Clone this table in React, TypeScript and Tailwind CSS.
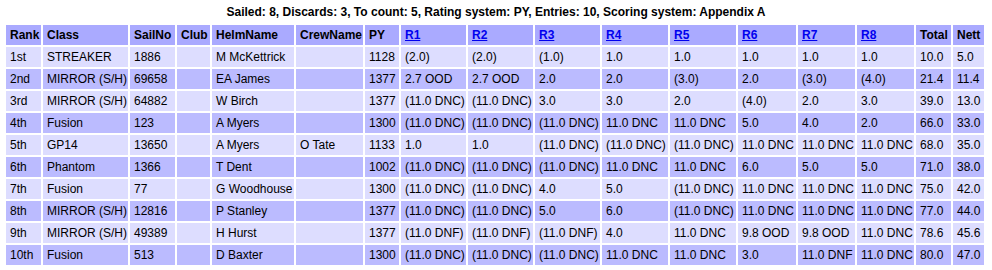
import React from "react";

type Row = string[];

const columns: { label: string; width: string; link?: boolean }[] = [
  { label: "Rank", width: "w-[35px]" },
  { label: "Class", width: "w-[85px]" },
  { label: "SailNo", width: "w-[45px]" },
  { label: "Club", width: "w-[33px]" },
  { label: "HelmName", width: "w-[82px]" },
  { label: "CrewName", width: "w-[67px]" },
  { label: "PY", width: "w-[34px]" },
  { label: "R1", width: "w-[65px]", link: true },
  { label: "R2", width: "w-[65px]", link: true },
  { label: "R3", width: "w-[65px]", link: true },
  { label: "R4", width: "w-[66px]", link: true },
  { label: "R5", width: "w-[66px]", link: true },
  { label: "R6", width: "w-[58px]", link: true },
  { label: "R7", width: "w-[57px]", link: true },
  { label: "R8", width: "w-[57px]", link: true },
  { label: "Total", width: "w-[35px]" },
  { label: "Nett", width: "w-[31px]" },
];

const rows: Row[] = [
  ["1st", "STREAKER", "1886", "", "M McKettrick", "", "1128", "(2.0)", "(2.0)", "(1.0)", "1.0", "1.0", "1.0", "1.0", "1.0", "10.0", "5.0"],
  ["2nd", "MIRROR (S/H)", "69658", "", "EA James", "", "1377", "2.7 OOD", "2.7 OOD", "2.0", "2.0", "(3.0)", "2.0", "(3.0)", "(4.0)", "21.4", "11.4"],
  ["3rd", "MIRROR (S/H)", "64882", "", "W Birch", "", "1377", "(11.0 DNC)", "(11.0 DNC)", "3.0", "3.0", "2.0", "(4.0)", "2.0", "3.0", "39.0", "13.0"],
  ["4th", "Fusion", "123", "", "A Myers", "", "1300", "(11.0 DNC)", "(11.0 DNC)", "(11.0 DNC)", "11.0 DNC", "11.0 DNC", "5.0", "4.0", "2.0", "66.0", "33.0"],
  ["5th", "GP14", "13650", "", "A Myers", "O Tate", "1133", "1.0", "1.0", "(11.0 DNC)", "(11.0 DNC)", "(11.0 DNC)", "11.0 DNC", "11.0 DNC", "11.0 DNC", "68.0", "35.0"],
  ["6th", "Phantom", "1366", "", "T Dent", "", "1002", "(11.0 DNC)", "(11.0 DNC)", "(11.0 DNC)", "11.0 DNC", "11.0 DNC", "6.0", "5.0", "5.0", "71.0", "38.0"],
  ["7th", "Fusion", "77", "", "G Woodhouse", "", "1300", "(11.0 DNC)", "(11.0 DNC)", "4.0", "5.0", "(11.0 DNC)", "11.0 DNC", "11.0 DNC", "11.0 DNC", "75.0", "42.0"],
  ["8th", "MIRROR (S/H)", "12816", "", "P Stanley", "", "1377", "(11.0 DNC)", "(11.0 DNC)", "5.0", "6.0", "(11.0 DNC)", "11.0 DNC", "11.0 DNC", "11.0 DNC", "77.0", "44.0"],
  ["9th", "MIRROR (S/H)", "49389", "", "H Hurst", "", "1377", "(11.0 DNF)", "(11.0 DNF)", "(11.0 DNF)", "4.0", "11.0 DNC", "9.8 OOD", "9.8 OOD", "11.0 DNC", "78.6", "45.6"],
  ["10th", "Fusion", "513", "", "D Baxter", "", "1300", "(11.0 DNC)", "(11.0 DNC)", "(11.0 DNC)", "11.0 DNC", "11.0 DNC", "3.0", "11.0 DNF", "11.0 DNC", "80.0", "47.0"],
];

export default function App() {
  return (
    <div className="bg-white text-black text-[12px] leading-[14px] font-['Liberation_Sans',Arial,sans-serif]">
      <div className="pt-[5px] pb-[4px] text-center font-bold">
        Sailed: 8, Discards: 3, To count: 5, Rating system: PY, Entries: 10, Scoring system: Appendix A
      </div>
      <table className="ml-[4px] w-[982px] table-fixed border-separate border-spacing-[2px]">
        <thead>
          <tr>
            {columns.map((c) => (
              <th
                key={c.label}
                className={`${c.width} h-[20px] bg-[#aaaaff] pl-[4px] pr-[2px] text-left font-bold whitespace-nowrap`}
              >
                {c.link ? (
                  <a href="#" className="text-[#0000ee] underline">
                    {c.label}
                  </a>
                ) : (
                  c.label
                )}
              </th>
            ))}
          </tr>
        </thead>
        <tbody>
          {rows.map((r, i) => (
            <tr key={r[0]} className={i % 2 === 0 ? "bg-[#ddddff]" : "bg-[#bbbbff]"}>
              {r.map((cell, j) => (
                <td key={j} className="h-[20px] pl-[4px] pr-[2px] whitespace-nowrap">
                  {cell}
                </td>
              ))}
            </tr>
          ))}
        </tbody>
      </table>
    </div>
  );
}
